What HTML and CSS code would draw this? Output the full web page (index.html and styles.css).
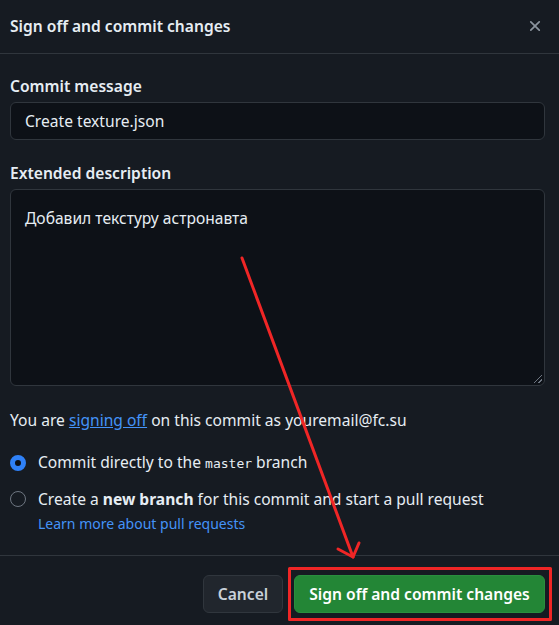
FILE: index.html
```html
<!DOCTYPE html>
<html lang="ru">
<head>
<meta charset="utf-8">
<title>Sign off and commit changes</title>
<link rel="stylesheet" href="styles.css">
</head>
<body>
<div class="dialog">
  <div class="header">
    <h1 class="title">Sign off and commit changes</h1>
    <svg class="close" width="18" height="18" viewBox="0 0 16 16" aria-hidden="true"><path d="M3.72 3.72a.75.75 0 0 1 1.06 0L8 6.94l3.22-3.22a.749.749 0 0 1 1.275.326.749.749 0 0 1-.215.734L9.06 8l3.22 3.22a.749.749 0 0 1-.326 1.275.749.749 0 0 1-.734-.215L8 9.060l-3.22 3.22a.751.751 0 0 1-1.042-.018.751.751 0 0 1-.018-1.042L6.94 8 3.72 4.78a.75.75 0 0 1 0-1.06Z" fill="currentColor"/></svg>
  </div>
  <div class="body">
    <div class="field">
      <label class="label">Commit message</label>
      <div class="input">Create texture.json</div>
    </div>
    <div class="field">
      <label class="label">Extended description</label>
      <div class="textarea">Добавил текстуру астронавта<span class="grip"></span></div>
    </div>
    <p class="signoff">You are <a class="link" href="#">signing off</a> on this commit as youremail@fc.su</p>
    <div class="options">
      <div class="option">
        <span class="radio checked"></span>
        <span>Commit directly to the <code class="mono">master</code> branch</span>
      </div>
      <div class="option">
        <span class="radio"></span>
        <span>Create a <b>new branch</b> for this commit and start a pull request</span>
      </div>
      <a class="learn" href="#">Learn more about pull requests</a>
    </div>
  </div>
  <div class="footer">
    <button class="btn btn-cancel">Cancel</button>
    <button class="btn btn-primary">Sign off and commit changes</button>
  </div>
</div>
<svg class="annotation" width="559" height="625" viewBox="0 0 559 625" aria-hidden="true">
  <g stroke="#f02626" stroke-width="3" fill="none" stroke-linecap="round" stroke-linejoin="round">
    <path d="M242 258 L353 557"/>
    <path d="M338 549 L353 557 L359 543"/>
    <rect x="289.5" y="568.5" width="261" height="51"/>
  </g>
</svg>
</body>
</html>
```

FILE: styles.css
```css
* { box-sizing: border-box; }
html, body { margin: 0; padding: 0; }
body {
  background: #161b22;
  color: #e6edf3;
  font-family: "Noto Sans", "Open Sans", sans-serif;
  font-size: 15.6px;
  line-height: 24px;
  width: 559px;
  height: 625px;
  overflow: hidden;
  position: relative;
}
.dialog { display: flex; flex-direction: column; }
.header {
  height: 54px;
  border-bottom: 1px solid #30363d;
  display: flex;
  align-items: center;
  justify-content: space-between;
  padding: 0 15px 2px 10px;
}
.title { margin: 0; font-size: 15.6px; font-weight: 600; line-height: 24px; }
.close { color: #8b949e; width: 18px; height: 18px; }
.body { padding: 20px 14px 0 10px; display: flex; flex-direction: column; }
.field { display: flex; flex-direction: column; gap: 4px; margin-bottom: 21px; }
.label { font-weight: 600; display: block; }
.input, .textarea {
  background: #0d1117;
  border: 1px solid #30363d;
  border-radius: 6px;
  padding: 6px 14px;
}
.input { height: 38px; }
.textarea { height: 197px; padding-top: 16px; position: relative; }
.grip {
  position: absolute; right: 2px; bottom: 2px;
  width: 8px; height: 8px;
  background: linear-gradient(135deg, transparent 45%, #6e7681 45%, #6e7681 55%, transparent 55%, transparent 75%, #6e7681 75%, #6e7681 85%, transparent 85%);
}
.signoff { margin: 1px 0 0; }
.link { color: #4493f8; text-decoration: underline; }
.options { display: flex; flex-direction: column; margin-top: 19px; }
.option { display: flex; align-items: center; gap: 12px; height: 24px; margin-bottom: 12px; }
.option:nth-child(2) { margin-bottom: 3px; }
.radio {
  width: 16px; height: 16px;
  border-radius: 50%;
  border: 1px solid #6e7681;
  flex: none;
}
.radio.checked { border: 5px solid #2f81f7; background: #0d1117; }
.mono { font-family: "DejaVu Sans Mono", "Liberation Mono", monospace; font-size: 13px; }
.learn { color: #4493f8; text-decoration: none; font-size: 14px; margin-left: 28px; line-height: 20px; align-self: flex-start; }
.footer {
  margin-top: 21px;
  border-top: 1px solid #30363d;
  display: flex;
  justify-content: flex-end;
  gap: 11px;
  padding: 19px 14px 0 0;
}
.btn {
  font-family: inherit;
  font-size: 15.6px;
  font-weight: 600;
  height: 38px;
  border-radius: 6px;
  border: 1px solid #30363d;
  padding: 0 8px;
  white-space: nowrap;
}
.btn-cancel { background: #21262d; color: #c9d1d9; width: 80px; }
.btn-primary { background: #238636; color: #ffffff; border-color: #2a8f3e; width: 251px; }
.annotation { position: absolute; left: 0; top: 0; pointer-events: none; }
```
